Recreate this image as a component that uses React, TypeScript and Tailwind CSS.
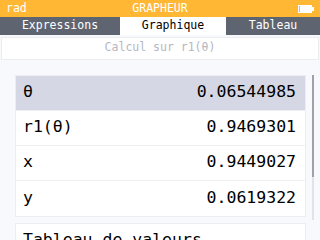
import React from "react";

const rows = [
  { label: "θ", value: "0.06544985", selected: true },
  { label: "r1(θ)", value: "0.9469301" },
  { label: "x", value: "0.9449027" },
  { label: "y", value: "0.0619322" },
];

function Battery() {
  return (
    <svg width="16" height="8" viewBox="0 0 16 8">
      <rect x="0" y="0" width="14" height="8" fill="white" />
      <rect x="1" y="1" width="1" height="6" fill="#FFB734" />
      <rect x="14" y="2" width="2" height="4" fill="white" />
    </svg>
  );
}

export default function App() {
  const mono = { fontFamily: '"DejaVu Sans Mono", "Liberation Mono", monospace' };
  return (
    <div className="w-[320px] h-[240px] overflow-hidden flex flex-col bg-[#F7F9FD]" style={mono}>
      {/* title bar */}
      <div className="h-[18px] bg-[#FFB734] flex items-center justify-between px-[6px] text-white text-[11.5px] relative">
        <span>rad</span>
        <span className="absolute left-1/2 -translate-x-1/2">GRAPHEUR</span>
        <span className="pr-[0px] mr-[0px] flex items-center">
          <Battery />
        </span>
      </div>

      {/* tabs */}
      <div className="h-[22px] flex bg-[#5F6570] text-[11.5px]">
        <div className="w-[120px] flex items-center justify-center text-white">Expressions</div>
        <div className="w-[106px] flex items-center justify-center bg-white text-black">Graphique</div>
        <div className="flex-1 flex items-center justify-center text-white">Tableau</div>
      </div>

      {/* content */}
      <div className="flex-1 flex flex-col pt-[2px]">
        <div className="mx-[1px] h-[23px] bg-white border border-[#ECEDEF] flex items-center justify-center text-[11.5px] text-[#B5B8BF]">
          Calcul sur r1(θ)
        </div>

        <div className="flex mt-[15px]">
          <div className="ml-[15px] w-[291px] flex flex-col gap-[6px]">
            <div className="border border-[#ECEDEF] bg-white">
              {rows.map((r, i) => (
                <div
                  key={r.label}
                  className={`h-[35px] flex items-center justify-between pl-[7px] pr-[9px] text-[16.5px] text-black ${
                    i < rows.length - 1 ? "border-b border-[#EEEFF1]" : ""
                  } ${r.selected ? "bg-[#D5D7E4]" : "bg-white"}`}
                >
                  <span>{r.label}</span>
                  <span>{r.value}</span>
                </div>
              ))}
            </div>
            <div className="border border-[#ECEDEF] bg-white h-[35px] flex items-center pl-[7px] text-[16.5px] text-black">
              Tableau de valeurs
            </div>
          </div>
          <div className="ml-[6px] w-[2px] flex flex-col">
            <div className="h-[102px] bg-[#9EA1A7]" />
            <div className="h-[43px] bg-[#E1E3E8]" />
          </div>
        </div>
      </div>
    </div>
  );
}
